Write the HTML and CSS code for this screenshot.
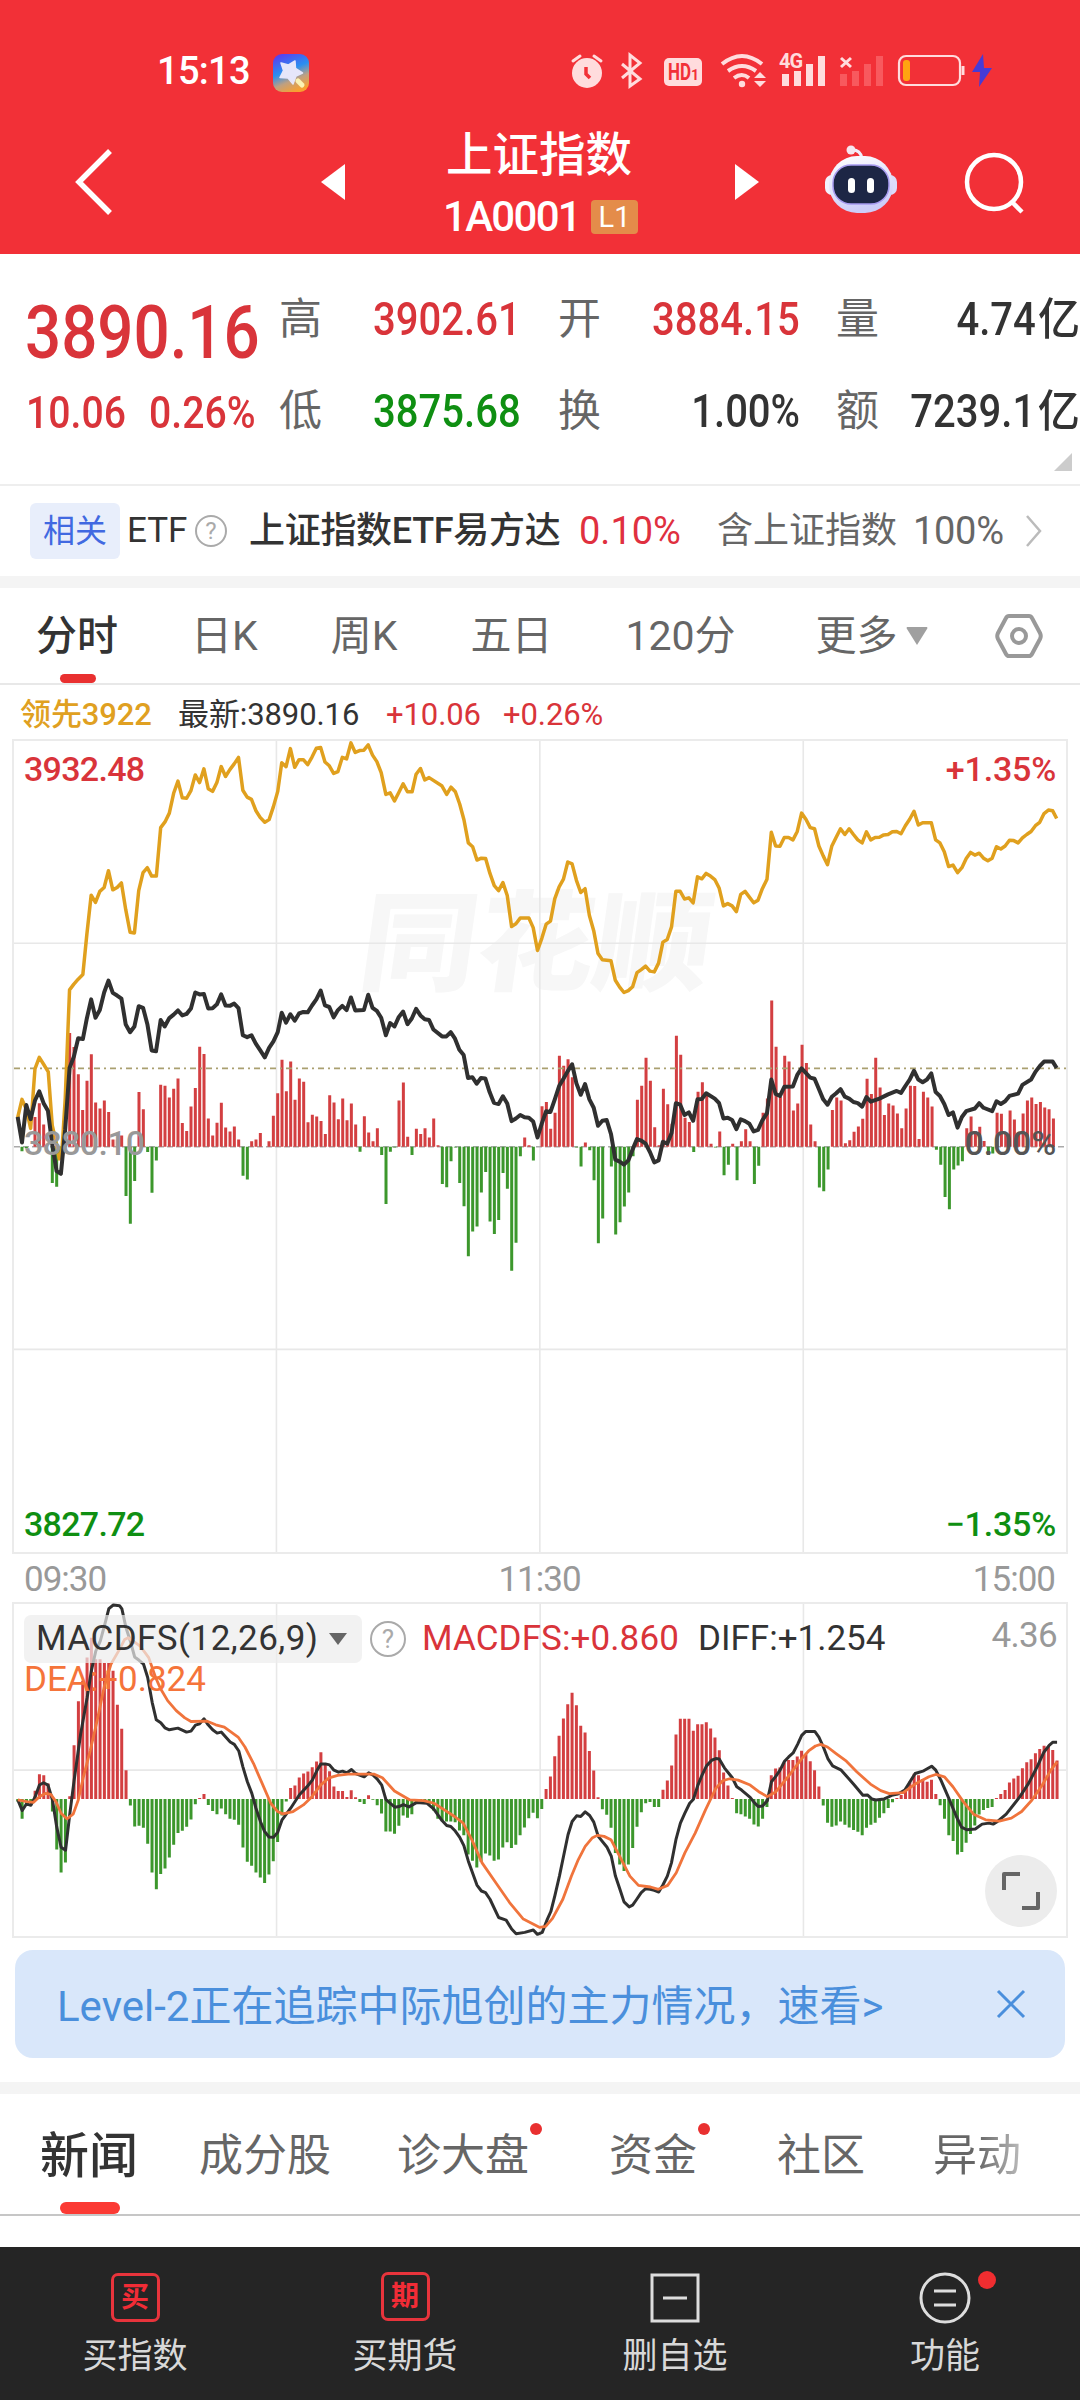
FILE: index.html
```html
<!DOCTYPE html>
<html lang="zh-CN">
<head>
    <meta charset="UTF-8">
    <meta name="viewport" content="width=device-width, initial-scale=1.0">
    <title>上证指数</title>
    <link rel="stylesheet" href="styles.css">
</head>
<body>
    <header class="header">
        <div class="status-bar">
            <span class="clock">15:13</span>
            <svg class="app-icon" width="36" height="38" viewBox="0 0 36 38">
                <defs>
                    <linearGradient id="app-bg" x1="0.2" y1="0" x2="0.6" y2="1">
                        <stop offset="0" stop-color="#5a3df0"/>
                        <stop offset="0.45" stop-color="#2b8ff0"/>
                        <stop offset="0.72" stop-color="#c0a080"/>
                        <stop offset="1" stop-color="#f8a030"/>
                    </linearGradient>
                </defs>
                <rect width="36" height="38" rx="9" fill="url(#app-bg)"/>
                <path d="M22 7l.5 7.500 7 4.500-6.500 3-3 8-5-6-8-.5 3.500-7L8 9l7.500 2z" fill="#e6e6fa" stroke="#e6e6fa" stroke-width="1.500" stroke-linejoin="round"/>
                <path d="M25 27l4 4" stroke="#fbf3b4" stroke-width="5" stroke-linecap="round"/>
            </svg>
            <svg class="status-icons" width="450" height="60" viewBox="0 0 450 60">
                <g fill="#ffdcdd">
                    <circle cx="27" cy="33" r="15"/>
                    <path d="M13 21l7-5M34 16l7 5" stroke="#ffdcdd" stroke-width="3" stroke-linecap="round"/>
                    <path d="M26 27v7l4 4" fill="none" stroke="#f23037" stroke-width="3.500"/>
                    <path d="M62 24l18 15-10 7V15l10 8-18 15" fill="none" stroke="#ffdcdd" stroke-width="3"/>
                    <rect x="104" y="18" width="38" height="28" rx="5"/>
                    <text x="108" y="40" class="hd" textLength="23" lengthAdjust="spacingAndGlyphs" fill="#f23037">HD</text>
                    <text x="131" y="40" class="hd-sub" fill="#f23037">1</text>
                    <g fill="none" stroke="#ffdcdd" stroke-width="4">
                        <path d="M162 24q20-16 40 0M168 31q14-10 28 0M174 38q8-6 15 0"/>
                    </g>
                    <circle cx="182" cy="44" r="3.200"/>
                    <path d="M194 38l6-6 6 6zM194 41h12l-6 6z"/>
                    <text x="219" y="28" class="net">4G</text>
                    <path d="M222 34h7v12h-7zM234 31h7v15h-7zM246 24h7v22h-7zM258 16h7v30h-7z"/>
                    <path d="M281 18l10 9M291 18l-10 9" stroke="#ffdcdd" stroke-width="3"/>
                </g>
                <path d="M280 34h7v12h-7zM292 31h7v15h-7zM304 24h7v22h-7zM316 16h7v30h-7z" fill="#f8595e"/>
                <rect x="339" y="16" width="61" height="29" rx="7" fill="none" stroke="#ffdcdd" stroke-width="2.200"/>
                <path d="M403 26v9" stroke="#ffdcdd" stroke-width="3"/>
                <rect x="343" y="20" width="7" height="21" rx="3" fill="#ffa311"/>
                <path d="M423 14L412 32h8l-1 15 13-19h-8z" fill="#473bd6"/>
            </svg>
        </div>
        <div class="title-bar">
            <svg width="40" height="68" viewBox="0 0 40 68"><path d="M36 3L5 34l31 31" fill="none" stroke="#fff" stroke-width="5.500"/></svg>
            <svg class="prev" width="24" height="38" viewBox="0 0 24 38"><path d="M24 1v36L0 19z" fill="#fff"/></svg>
            <div class="title">
                <h1>上证指数</h1>
                <div class="code"><span>1A0001</span><em>L1</em></div>
            </div>
            <svg class="next" width="24" height="38" viewBox="0 0 24 38"><path d="M0 1v36l24-18z" fill="#fff"/></svg>
            <svg class="robot" width="74" height="70" viewBox="0 0 74 70">
                <defs>
                    <linearGradient id="robot-head" x1="0" y1="0" x2="0.3" y2="1">
                        <stop offset="0" stop-color="#ffffff"/>
                        <stop offset="1" stop-color="#cdcdf8"/>
                    </linearGradient>
                </defs>
                <path d="M27 5q9-1 11 8" fill="none" stroke="#f1eefc" stroke-width="3"/>
                <circle cx="27" cy="5" r="4.500" fill="#f6e6ef"/>
                <rect x="1" y="30" width="15" height="20" rx="7" fill="#f3f1fc"/>
                <rect x="58" y="30" width="15" height="20" rx="7" fill="#dcdcfa"/>
                <rect x="5" y="11" width="64" height="57" rx="28" fill="url(#robot-head)"/>
                <rect x="9" y="20" width="56" height="39" rx="18" fill="#1d2645" stroke="#a79af0" stroke-width="1.500"/>
                <rect x="24" y="33" width="7" height="15" rx="3.500" fill="#fff"/>
                <rect x="43" y="33" width="7" height="15" rx="3.500" fill="#fff"/>
            </svg>
            <svg class="search" width="62" height="64" viewBox="0 0 62 64"><g fill="none" stroke="#fff" stroke-width="4.500"><circle cx="30" cy="31" r="27"/><path d="M48 51l10 10"/></g></svg>
        </div>
    </header>

    <section class="quote">
        <span class="price num red">3890.16</span>
        <span class="label">高</span><span class="value num red">3902.61</span>
        <span class="label">开</span><span class="value num red">3884.15</span>
        <span class="label">量</span><span class="value num">4.74<i>亿</i></span>
        <span class="change red"><span class="num">10.06</span><span class="num">0.26%</span></span>
        <span class="label">低</span><span class="value num green">3875.68</span>
        <span class="label">换</span><span class="value num">1.00%</span>
        <span class="label">额</span><span class="value num">7239.1<i>亿</i></span>
        <svg class="corner" width="18" height="18" viewBox="0 0 18 18"><path d="M18 0v18H0z" fill="#ccc"/></svg>
    </section>

    <section class="etf">
        <span class="tag">相关</span>
        <span class="etf-type">ETF</span>
        <span class="help">?</span>
        <span class="etf-name">上证指数ETF易方达</span>
        <span class="etf-rate">0.10%</span>
        <span class="etf-hold">含上证指数</span>
        <span class="etf-share">100%</span>
        <svg width="18" height="34" viewBox="0 0 18 34"><path d="M2 2l13 15L2 32" fill="none" stroke="#bbb" stroke-width="2.500"/></svg>
    </section>

    <nav class="period-tabs">
        <span class="active">分时</span>
        <span>日K</span>
        <span>周K</span>
        <span>五日</span>
        <span>120分</span>
        <span class="more">更多<svg width="22" height="18" viewBox="0 0 22 18"><path d="M1 0h20q1 1 0 2L11 18 1 2q-1-1 0-2z" fill="#a0a0a0"/></svg></span>
        <svg class="settings" width="48" height="46" viewBox="0 0 48 46"><g fill="none" stroke="#999" stroke-width="4"><path d="M14 3h20q2 0 3 2l8 15q1.500 3 0 6l-8 15q-1 2-3 2H14q-2 0-3-2L3 26q-1.500-3 0-6l8-15q1-2 3-2z"/><circle cx="24" cy="23" r="7"/></g></svg>
    </nav>

    <div class="latest">
        <span class="lead">领先3922</span>
        <span class="last">最新:3890.16</span>
        <span class="red diff">+10.06</span>
        <span class="red">+0.26%</span>
    </div>

    <section class="chart main-chart">
        <div class="watermark">同花顺</div>
        <svg class="plot" viewBox="39 103 3163 2125" preserveAspectRatio="none">
            <path class="grid" d="M828 103V2228M1620 103V2228M2412 103V2228M39 633H3202M39 1697H3202"/>
            <path class="zero" d="M39 1166H3202"/>
            <path class="up" id="main-up"/>
            <path class="down" id="main-down"/>
            <path class="ref-line" d="M39 961H3202"/>
            <polyline class="lead-line" points="50,1090 63,1042 76,1068 89,1118 102,962 115,932 128,950 142,970 154,1110 167,1160 175,1198 184,1165 193,1040 206,755 219,740 232,727 246,715 258,610 271,507 284,526 297,497 310,487 323,443 336,493 349,487 362,475 375,545 388,604 401,606 414,495 427,448 440,435 453,457 467,457 480,330 493,315 506,292 519,240 532,208 545,252 558,253 571,233 584,192 597,212 610,176 623,228 636,235 649,212 662,170 675,196 688,178 701,163 714,146 727,232 740,250 753,256 766,285 779,303 793,316 806,309 819,275 832,235 844,160 857,170 870,123 883,172 896,152 909,152 922,165 935,145 948,122 961,120 974,158 987,168 1000,188 1013,183 1026,146 1039,150 1052,108 1065,133 1078,128 1091,127 1104,113 1117,140 1130,157 1143,186 1157,243 1170,239 1183,260 1196,238 1209,215 1222,236 1236,236 1248,190 1261,175 1274,205 1287,199 1325,220 1340,243 1353,224 1366,236 1379,268 1392,310 1405,370 1418,380 1431,415 1444,410 1457,411 1470,450 1483,482 1496,495 1509,474 1522,508 1535,589 1548,582 1561,567 1587,567 1600,592 1613,652 1626,620 1639,583 1652,575 1665,516 1678,485 1691,465 1704,420 1717,425 1730,468 1743,500 1756,490 1769,560 1782,600 1795,660 1808,676 1834,679 1847,730 1860,748 1873,762 1886,757 1899,747 1912,710 1925,702 1938,693 1951,706 1964,708 1977,685 1990,630 2003,623 2016,590 2029,497 2042,497 2055,517 2068,514 2081,527 2094,459 2107,464 2120,450 2133,457 2146,466 2159,488 2172,535 2185,529 2198,535 2211,550 2224,505 2237,497 2250,512 2263,527 2276,520 2289,490 2303,465 2316,342 2329,378 2342,379 2355,356 2368,356 2381,362 2394,340 2407,292 2420,308 2433,330 2446,333 2459,378 2472,404 2485,427 2498,378 2511,355 2524,333 2537,348 2550,333 2563,348 2576,362 2589,370 2602,341 2615,362 2628,356 2641,355 2654,349 2667,348 2680,341 2693,340 2706,346 2719,325 2732,308 2745,287 2758,323 2771,317 2797,317 2810,362 2823,370 2836,393 2849,432 2862,428 2876,448 2889,435 2902,411 2915,395 2928,402 2941,397 2954,410 2967,417 2980,410 2993,380 3006,386 3019,378 3032,363 3045,364 3058,370 3071,357 3084,348 3097,340 3110,325 3123,316 3136,293 3149,284 3162,286 3174,306"/>
            <polyline class="index-line" points="50,1088 63,1155 76,1057 89,1094 102,1045 115,1021 128,1052 141,1072 154,1160 167,1230 180,1237 193,1120 206,960 219,930 232,882 246,884 258,830 271,780 284,828 297,808 310,762 323,731 336,763 349,770 362,778 375,846 388,866 401,851 414,798 427,802 440,845 453,914 466,916 480,834 492,851 506,829 519,820 532,809 545,822 558,818 571,804 584,762 597,767 610,766 623,804 636,803 649,793 662,767 675,796 688,797 701,791 714,803 727,874 740,879 753,874 766,896 779,913 793,932 806,907 819,890 832,866 844,815 857,841 870,819 883,836 896,817 909,813 922,814 935,796 948,780 961,757 974,796 987,800 1000,827 1013,808 1026,797 1039,808 1052,775 1065,809 1091,808 1104,768 1117,802 1130,810 1143,828 1157,874 1170,842 1183,851 1196,826 1209,812 1222,845 1235,830 1248,805 1261,822 1274,832 1287,834 1300,859 1326,877 1339,877 1352,866 1365,883 1378,912 1391,926 1404,986 1417,984 1430,1001 1443,986 1456,987 1469,1023 1482,1051 1496,1054 1509,1034 1522,1053 1535,1099 1548,1092 1561,1083 1574,1089 1587,1090 1600,1100 1613,1142 1626,1105 1639,1073 1652,1075 1665,1042 1678,1007 1691,988 1704,968 1717,950 1730,1000 1743,1030 1756,1002 1769,1042 1782,1064 1795,1111 1808,1098 1821,1096 1834,1133 1847,1200 1860,1205 1873,1213 1886,1202 1899,1173 1912,1146 1925,1150 1938,1158 1951,1180 1964,1207 1977,1202 1990,1153 2003,1158 2016,1130 2029,1052 2042,1056 2055,1083 2068,1076 2081,1098 2094,1042 2107,1041 2120,1026 2146,1040 2159,1052 2172,1092 2185,1090 2198,1096 2211,1120 2224,1094 2237,1099 2250,1106 2263,1126 2276,1122 2289,1097 2303,1078 2316,990 2329,1028 2342,1033 2355,1009 2381,1008 2394,978 2407,961 2433,985 2446,988 2459,1015 2472,1042 2485,1056 2498,1035 2511,1026 2524,1015 2537,1035 2550,1040 2563,1049 2576,1052 2589,1061 2602,1036 2615,1048 2641,1040 2667,1029 2693,1020 2706,1025 2719,1007 2732,990 2745,967 2758,990 2771,997 2784,990 2797,974 2810,1023 2823,1033 2836,1054 2849,1083 2862,1076 2876,1116 2889,1088 2902,1073 2928,1066 2941,1052 2954,1064 2980,1073 2993,1047 3006,1054 3019,1047 3032,1033 3058,1027 3071,1004 3097,990 3110,970 3123,955 3136,943 3162,943 3174,960"/>
        </svg>
        <span class="axis top-left red">3932.48</span>
        <span class="axis top-right red">+1.35%</span>
        <span class="axis mid-left">3880.10</span>
        <span class="axis mid-right">0.00%</span>
        <span class="axis bottom-left green">3827.72</span>
        <span class="axis bottom-right green">−1.35%</span>
    </section>

    <div class="times"><span>09:30</span><span>11:30</span><span>15:00</span></div>

    <section class="chart macd-chart">
        <svg class="plot" viewBox="38 368 3061 1003" preserveAspectRatio="none">
            <path class="grid" d="M802 368V1371M1569 368V1371M2335 368V1371M38 870H3099"/>
            <path class="up" id="macd-up"/>
            <path class="down" id="macd-down"/>
            <polyline class="diff-line" points="49,960 62,992 74,972 87,976 99,952 112,915 124,908 137,915 150,960 162,1040 175,1103 188,1112 200,1005 213,900 232,760 251,650 263,570 276,510 289,480 302,430 314,382 327,371 345,373 352,383 364,440 377,482 389,528 402,538 415,550 427,590 440,665 452,718 465,727 477,742 490,748 515,743 540,755 553,752 566,734 578,730 591,715 603,733 616,748 629,758 641,755 654,770 667,785 679,792 692,812 704,860 717,905 730,940 742,985 755,1025 767,1055 780,1072 793,1073 805,1058 818,1020 843,985 868,945 893,917 906,900 919,872 931,851 944,851 956,854 969,870 982,876 994,873 1007,878 1020,868 1032,880 1057,890 1070,878 1083,885 1095,897 1108,915 1120,958 1133,970 1146,982 1158,980 1171,974 1187,981 1209,968 1240,970 1259,987 1284,1023 1297,1037 1309,1040 1322,1054 1335,1073 1347,1098 1360,1145 1385,1217 1398,1235 1410,1240 1423,1260 1448,1315 1470,1323 1486,1350 1499,1364 1524,1360 1549,1353 1561,1366 1575,1360 1590,1320 1600,1297 1612,1248 1625,1190 1637,1130 1650,1065 1662,1025 1675,1008 1687,1010 1700,996 1713,1007 1725,1027 1738,1070 1763,1102 1776,1130 1788,1190 1801,1230 1813,1268 1828,1283 1838,1278 1850,1260 1863,1240 1876,1228 1889,1230 1901,1233 1914,1238 1926,1217 1939,1190 1951,1150 1964,1080 1977,1030 1990,1000 2004,970 2015,958 2028,915 2040,885 2053,857 2068,840 2080,835 2090,836 2105,863 2128,893 2141,920 2155,930 2180,952 2192,968 2204,980 2216,978 2230,962 2242,905 2255,888 2267,870 2280,843 2292,830 2305,818 2318,792 2330,765 2342,753 2368,753 2380,770 2393,800 2406,835 2420,857 2445,870 2458,885 2483,915 2508,946 2521,945 2534,957 2546,960 2570,957 2595,945 2610,942 2630,930 2645,905 2660,880 2685,872 2708,858 2720,870 2735,900 2760,960 2780,1010 2795,1042 2810,1050 2835,1048 2855,1033 2875,1030 2887,1033 2900,1025 2925,1003 2950,970 2965,950 2990,910 3015,860 3035,815 3050,795 3060,786 3073,786"/>
            <polyline class="dea-line" points="49,960 75,965 95,967 112,950 130,940 145,943 160,965 175,1000 192,1017 210,1003 225,960 240,890 260,810 280,720 300,620 320,550 345,505 360,475 370,470 385,480 405,495 430,530 450,590 465,625 485,660 510,690 535,712 553,723 600,722 625,733 650,740 690,770 710,800 735,850 760,910 785,970 805,995 820,1002 850,995 880,975 905,950 930,915 955,893 980,886 1010,882 1085,882 1110,893 1145,933 1190,960 1230,962 1260,970 1290,990 1320,1010 1345,1030 1370,1080 1400,1150 1440,1210 1480,1270 1520,1320 1568,1345 1585,1342 1605,1318 1635,1260 1660,1190 1680,1140 1700,1100 1720,1075 1735,1067 1755,1070 1775,1080 1800,1130 1830,1190 1855,1218 1890,1223 1913,1230 1940,1218 1965,1180 1990,1120 2020,1060 2050,990 2080,925 2100,902 2120,896 2145,900 2180,915 2205,935 2230,950 2255,935 2290,890 2330,835 2350,812 2370,797 2385,792 2405,800 2430,820 2460,843 2490,875 2530,912 2560,932 2585,941 2625,938 2660,912 2700,890 2720,883 2745,890 2770,920 2800,965 2830,1003 2865,1020 2905,1024 2940,1015 2970,995 3000,960 3030,915 3055,870 3073,845"/>
        </svg>
        <div class="macd-info">
            <span class="macd-pill">MACDFS(12,26,9)<svg width="18" height="12" viewBox="0 0 18 12"><path d="M0 0h18L9 12z" fill="#666"/></svg></span>
            <span class="help">?</span>
            <span class="macd-value red">MACDFS:+0.860</span>
            <span class="macd-diff">DIFF:+1.254</span>
            <span class="macd-max">4.36</span>
        </div>
        <div class="macd-dea">DEA:+0.824</div>
        <div class="expand"><svg width="38" height="38" viewBox="0 0 38 38"><path d="M18 2H2v16M36 20v16H20" fill="none" stroke="#666" stroke-width="4" stroke-linejoin="round"/></svg></div>
    </section>

    <div class="banner">
        <span>Level-2正在追踪中际旭创的主力情况，速看&gt;</span>
        <svg width="30" height="30" viewBox="0 0 30 30"><path d="M2 2l26 26M28 2L2 28" stroke="#4a8fdc" stroke-width="3"/></svg>
    </div>

    <nav class="news-tabs">
        <span class="active">新闻</span>
        <span>成分股</span>
        <span class="dot">诊大盘</span>
        <span class="dot">资金</span>
        <span>社区</span>
        <span class="fade">异动</span>
    </nav>

    <footer class="toolbar">
        <div class="tool"><span class="box">买</span>买指数</div>
        <div class="tool"><span class="box up-box">期</span>买期货</div>
        <div class="tool"><svg width="52" height="52" viewBox="0 0 52 52"><path d="M3 3h46v46H3zM14 26h24" fill="none" stroke="#ddd" stroke-width="3"/></svg>删自选</div>
        <div class="tool badge"><svg width="52" height="52" viewBox="0 0 52 52"><g fill="none" stroke="#ddd" stroke-width="3"><circle cx="26" cy="26" r="24"/><path d="M15 19h22M15 33h22"/></g></svg>功能</div>
    </footer>
    <script src="chart.js"></script>
</body>
</html>
```
FILE: styles.css
```css
* {
    box-sizing: border-box;
}
body {
    margin: 0;
    width: 1080px;
    height: 2400px;
    overflow: hidden;
    background: #fff;
    color: #333;
    font-family: Roboto, "Noto Sans CJK SC", sans-serif;
    white-space: nowrap;
}
svg {
    display: block;
    flex: none;
}
.red {
    color: #d9343a;
}
.green {
    color: #0f8f12;
}
/* narrow figures */
.num {
    display: inline-block;
    transform: scaleX(0.87);
    transform-origin: left center;
    font-weight: 500;
}

/* header */
.header {
    height: 254px;
    background: #f23037;
    color: #fff;
}
.status-bar {
    display: flex;
    align-items: flex-start;
    height: 124px;
    padding: 40px 0 0 157px;
}
.clock {
    width: 116px;
    margin-top: 9px;
    font-size: 38px;
    line-height: 44px;
    font-weight: 500;
    letter-spacing: -0.7px;
}
.app-icon {
    margin-top: 14px;
}
.status-icons {
    margin-left: 251px;
}
.hd {
    font-size: 23px;
    font-weight: 700;
}
.hd-sub {
    font-size: 14px;
    font-weight: 700;
}
.net {
    font-size: 20px;
    font-weight: 700;
    letter-spacing: -1px;
}
.title-bar {
    display: flex;
    align-items: center;
    height: 116px;
    padding-left: 74px;
}
.prev {
    margin-left: 207px;
}
.title {
    width: 260px;
    margin: 7px 66px 0 64px;
}
.title h1 {
    margin: 0;
    padding-left: 37px;
    font-size: 46.5px;
    line-height: 62px;
    font-weight: 500;
}
.code {
    display: flex;
    align-items: center;
    padding-left: 34px;
    font-size: 42px;
    line-height: 62px;
    font-weight: 500;
    letter-spacing: -1.7px;
}
.code span {
    width: 148px;
}
.code em {
    width: 47px;
    height: 34px;
    border-radius: 4px;
    background: #e48c4a;
    font-size: 29px;
    line-height: 34px;
    font-style: normal;
    font-weight: 400;
    letter-spacing: 0;
    text-align: center;
}
.robot {
    margin: -4px 0 0 65px;
}
.search {
    margin-left: 66px;
    margin-top: 2px;
}

/* quote */
.quote {
    position: relative;
    display: grid;
    grid-template-columns: 251px 44px 198px 37px 44px 198px 36px 44px 200px;
    grid-template-rows: 92px 92px;
    align-items: center;
    height: 232px;
    padding: 19px 0 0 28px;
    border-bottom: 2px solid #eee;
}
.quote .label {
    font-size: 43px;
    line-height: 60px;
    color: #666;
}
.quote .label:nth-of-type(4), .quote .label:nth-of-type(11) {
    grid-column: 5;
}
.quote .label:nth-of-type(6), .quote .label:nth-of-type(13) {
    grid-column: 8;
}
.quote .value {
    justify-self: end;
    transform-origin: right center;
    font-size: 46px;
    line-height: 60px;
}
.quote i {
    display: inline-block;
    margin-left: 7px;
    font-style: normal;
    font-weight: 500;
    font-size: 44px;
    transform: scaleX(1.1);
    transform-origin: right center;
}
.price {
    margin: 27px 0 0 -3px;
    font-size: 74px;
    line-height: 80px;
    transform: scaleX(0.86);
}
.change {
    display: flex;
    gap: 12px;
    margin: 3px 0 0 -2px;
    font-size: 45px;
    line-height: 60px;
}
.change .num {
    width: 111px;
}
.corner {
    position: absolute;
    right: 8px;
    bottom: 13px;
}

/* related etf */
.etf {
    display: flex;
    align-items: center;
    height: 102px;
    padding-left: 30px;
    border-bottom: 12px solid #f4f4f4;
    font-size: 35px;
    line-height: 50px;
}
.tag {
    width: 90px;
    height: 56px;
    border-radius: 6px;
    background: #e8eefb;
    color: #4169e1;
    font-size: 32px;
    line-height: 56px;
    text-align: center;
}
.etf-type {
    width: 68px;
    margin-left: 7px;
}
.help {
    width: 32px;
    height: 32px;
    border: 2px solid #aaa;
    border-radius: 50%;
    color: #aaa;
    font-size: 24px;
    line-height: 29px;
    text-align: center;
}
.etf-name {
    width: 330px;
    margin-left: 22px;
    font-size: 36px;
    font-weight: 500;
    letter-spacing: -0.3px;
}
.etf-rate {
    width: 138px;
    color: #e0303f;
    font-size: 38px;
}
.etf-hold {
    width: 196px;
    color: #666;
    font-size: 36px;
}
.etf-share {
    width: 112px;
    color: #666;
    font-size: 38px;
    letter-spacing: -0.3px;
}

/* period tabs */
.period-tabs {
    display: flex;
    align-items: center;
    gap: 73px;
    height: 97px;
    padding: 0 0 0 36px;
    border-bottom: 2px solid #e8e8e8;
    color: #666;
    font-size: 41px;
    line-height: 96px;
}
.period-tabs .active, .news-tabs .active {
    position: relative;
    color: #333;
    font-weight: 500;
}
.period-tabs .active::after {
    content: "";
    position: absolute;
    left: 24px;
    bottom: 1px;
    width: 36px;
    height: 9px;
    border-radius: 5px;
    background: #e93030;
}
.more {
    display: flex;
    align-items: center;
    gap: 8px;
    margin-left: 7px;
}
.settings {
    margin-left: -6px;
}

/* intraday chart */
.latest {
    display: flex;
    height: 54px;
    padding-left: 20px;
    font-size: 31px;
    line-height: 59px;
    letter-spacing: -0.1px;
}
.latest .lead {
    width: 158px;
    color: #e0a021;
    font-weight: 500;
}
.latest .last {
    width: 208px;
}
.latest .diff {
    width: 117px;
}
.chart {
    position: relative;
    width: 1056px;
    margin-left: 12px;
    border: 2px solid #ebebeb;
}
.main-chart {
    height: 815px;
}
.macd-chart {
    height: 336px;
}
.plot {
    width: 100%;
    height: 100%;
    overflow: visible;
    position: relative;
}
.plot path, .plot polyline {
    fill: none;
    vector-effect: non-scaling-stroke;
    stroke-linejoin: round;
}
.grid {
    stroke: #e8e8e8;
    stroke-width: 1.6;
}
.zero {
    stroke: #aaa;
    stroke-width: 1.4;
    stroke-dasharray: 6 3;
}
.ref-line {
    stroke: #aaa070;
    stroke-width: 1.8;
    stroke-dasharray: 6 4 2 4;
}
.plot .up {
    stroke: #d33f41;
    stroke-width: 3;
}
.plot .down {
    stroke: #3c972c;
    stroke-width: 3;
}
.lead-line {
    stroke: #e0a01e;
    stroke-width: 3.5;
}
.index-line {
    stroke: #303030;
    stroke-width: 4;
}
.diff-line {
    stroke: #303030;
    stroke-width: 3;
}
.dea-line {
    stroke: #f0743c;
    stroke-width: 2.8;
}
.watermark {
    position: absolute;
    left: 347px;
    top: 134px;
    font-size: 117px;
    line-height: 140px;
    font-weight: 900;
    color: #f7f7f7;
    transform: skewX(-8deg) scaleY(0.93);
}
.axis {
    position: absolute;
    font-size: 34px;
    line-height: 40px;
    font-weight: 500;
    letter-spacing: -0.7px;
}
.top-left, .mid-left, .bottom-left {
    left: 10px;
}
.top-right, .mid-right, .bottom-right {
    right: 10px;
    letter-spacing: -0.2px;
}
.top-left, .top-right {
    top: 8px;
}
.mid-left, .mid-right {
    top: 382px;
}
.mid-left {
    color: #999;
}
.mid-right {
    color: #555;
}
.bottom-left, .bottom-right {
    bottom: 8px;
}
.times {
    display: flex;
    justify-content: space-between;
    height: 48px;
    padding: 0 25px 0 24px;
    color: #999;
    font-size: 35px;
    line-height: 51px;
    letter-spacing: -1px;
}
.macd-info {
    position: absolute;
    left: 10px;
    right: 10px;
    top: 10px;
    display: flex;
    align-items: center;
    font-size: 35px;
    line-height: 50px;
}
.macd-pill {
    display: flex;
    align-items: center;
    justify-content: space-between;
    width: 338px;
    height: 48px;
    padding: 0 15px 0 12px;
    border-radius: 7px;
    background: rgba(236, 236, 236, 0.7);
    letter-spacing: 0.45px;
}
.macd-info .help {
    width: 36px;
    height: 36px;
    margin-left: 8px;
    font-size: 26px;
    line-height: 33px;
}
.macd-value {
    width: 276px;
    margin-left: 16px;
    letter-spacing: 0.1px;
}
.macd-max {
    margin: -7px -1px 0 auto;
    color: #999;
    letter-spacing: -0.7px;
}
.macd-dea {
    position: absolute;
    left: 10px;
    top: 55px;
    color: #f5743a;
    font-size: 35px;
    line-height: 42px;
}
.expand {
    position: absolute;
    right: 9px;
    bottom: 9px;
    display: flex;
    align-items: center;
    justify-content: center;
    width: 72px;
    height: 72px;
    border-radius: 50%;
    background: #ececec;
}

/* banner */
.banner {
    display: flex;
    align-items: center;
    justify-content: space-between;
    height: 108px;
    margin: 12px 15px 24px;
    padding: 0 39px 0 42px;
    border-radius: 18px;
    background: #d9e7fa;
    color: #4a8fdc;
    font-size: 42px;
}
.banner span {
    margin-top: -3px;
}

/* news tabs */
.news-tabs {
    display: flex;
    height: 134px;
    padding-left: 40px;
    border-top: 12px solid #f4f4f4;
    border-bottom: 2px solid #c6c6c6;
    color: #666;
    font-size: 44px;
    line-height: 125px;
}
.news-tabs span {
    position: relative;
    height: 120px;
    margin-right: 66px;
}
.news-tabs .active {
    margin-right: 61px;
    font-size: 49px;
}
.news-tabs .active::after {
    content: "";
    position: absolute;
    left: 20px;
    bottom: 0;
    width: 60px;
    height: 12px;
    border-radius: 6px;
    background: #fb3a34;
}
.news-tabs .dot {
    margin-right: 80px;
}
.dot::after {
    content: "";
    position: absolute;
    right: -13px;
    top: 29px;
    width: 12px;
    height: 12px;
    border-radius: 50%;
    background: #e93030;
}
.news-tabs .fade {
    margin: 0 0 0 2px;
    background: linear-gradient(90deg, #666 50%, #bbb);
    -webkit-background-clip: text;
    color: transparent;
}

/* bottom toolbar */
.toolbar {
    display: flex;
    height: 153px;
    margin-top: 31px;
    background: #252525;
}
.tool {
    position: relative;
    flex: 1;
    display: flex;
    flex-direction: column;
    align-items: center;
    gap: 8px;
    padding-top: 25px;
    color: #d8d8d8;
    font-size: 35px;
    line-height: 50px;
}
.box {
    width: 49px;
    height: 49px;
    margin: 1px 0 2px;
    border: 3px solid #e8343c;
    border-radius: 7px;
    color: #f22c36;
    font-size: 28px;
    line-height: 43px;
    font-weight: 700;
    text-align: center;
}
.up-box {
    margin: 0 0 3px;
}
.badge::after {
    content: "";
    position: absolute;
    left: 168px;
    top: 24px;
    width: 18px;
    height: 18px;
    border-radius: 50%;
    background: #f02d30;
}
```
FILE: chart.js
```js
const flow = [
    0, -12, -4, 0, 78, 114, 58, 0, -95, -105, -30, 60, 298, 261, 190, 96, 173, 242, 116, 100,
    121, 91, 19, 19, 29, -129, -202, -90, 143, 98, -14, -121, -36, 162, 160, 129, 152, 179, 62, 41,
    105, 154, 262, 243, 74, 29, 63, 115, 50, 40, 53, 19, -76, -86, 14, 19, 36, 0, 14, 81,
    140, 228, 145, 223, 123, 179, 170, 64, 84, 79, 67, 33, 135, 116, 72, 126, 69, 113, 58, -13,
    80, 37, 14, 48, -22, -150, -13, -2, 121, 168, 26, -22, 47, 33, 48, 24, 74, 4, -98, -106,
    -38, -2, -95, -156, -287, -222, -209, -120, -66, -196, -229, -192, -69, -110, -325, -252, -25, 24, 4, -36,
    0, 106, 117, 47, 89, 238, 212, 229, 182, -2, -52, 11, -9, -88, -253, -188, 0, -52, -230, -198,
    -157, -120, -25, 123, 160, 233, 173, 51, 4, 152, 111, 60, 291, 241, 76, 65, -14, 144, 169, 136,
    8, -2, 40, -75, -47, 8, -88, 14, 46, 14, -98, -50, 89, 126, 383, 262, 130, 238, 223, 95,
    113, 267, 219, 58, 14, -107, -117, -60, 96, 129, 121, 9, 17, 39, 53, 73, 178, 138, 233, 155,
    83, 113, 108, 87, 48, 100, 160, 159, 20, 144, 129, 105, -8, -47, -132, -164, -60, -49, -38, 48,
    79, 40, 52, 15, -22, -18, 89, 86, 37, 95, 71, 33, 87, 121, 129, 112, 117, 103, 98, 74
];

const macd = [
    -8, -60, -18, -10, 25, 75, 72, 47, -38, -153, -222, -192, 8, 162, 295, 357, 427, 487, 422, 422,
    411, 411, 387, 285, 212, 87, -20, -83, -81, -87, -135, -222, -273, -227, -210, -177, -138, -103, -96, -84,
    -62, -16, 3, 15, -18, -36, -46, -29, -46, -60, -63, -78, -147, -190, -202, -222, -237, -254, -228, -188,
    -130, -50, -8, 33, 41, 65, 77, 83, 96, 113, 141, 103, 84, 38, 24, 24, 6, 26, 5, -9,
    -15, 11, -2, -19, -44, -98, -98, -105, -81, -50, -57, -46, -12, -8, -12, -16, -35, -60, -65, -68,
    -68, -70, -95, -110, -168, -187, -207, -190, -165, -171, -187, -183, -147, -131, -148, -138, -110, -86, -58, -42,
    -58, -30, 30, 68, 129, 191, 243, 286, 321, 283, 221, 201, 145, 86, 5, -31, -48, -87, -163, -198,
    -218, -198, -148, -84, -40, -13, -9, -24, -24, 28, 56, 101, 195, 242, 242, 242, 206, 226, 226, 232,
    213, 186, 147, 80, 41, 3, -43, -46, -53, -60, -77, -83, -60, -24, 72, 92, 95, 110, 118, 118,
    128, 146, 135, 114, 87, 38, -20, -72, -84, -80, -68, -78, -86, -94, -99, -110, -87, -78, -72, -57,
    -43, -27, -10, 3, 12, 31, 53, 76, 72, 60, 52, 58, 15, -19, -60, -110, -127, -168, -160, -132,
    -106, -80, -47, -33, -27, -24, 3, 15, 27, 50, 62, 70, 93, 111, 120, 138, 151, 161, 158, 148, 116
];

function drawBars(name, values, start, step, zero) {
    let up = '';
    let down = '';
    values.forEach((v, i) => {
        let bar = `M${(start + i * step).toFixed(1)} ${zero}v${-v}`;
        if (v > 0) up += bar;
        if (v < 0) down += bar;
    });
    document.getElementById(name + '-up').setAttribute('d', up);
    document.getElementById(name + '-down').setAttribute('d', down);
}

drawBars('main', flow, 50, 13.03, 1166);
drawBars('macd', macd, 49, 12.6, 957);
```
